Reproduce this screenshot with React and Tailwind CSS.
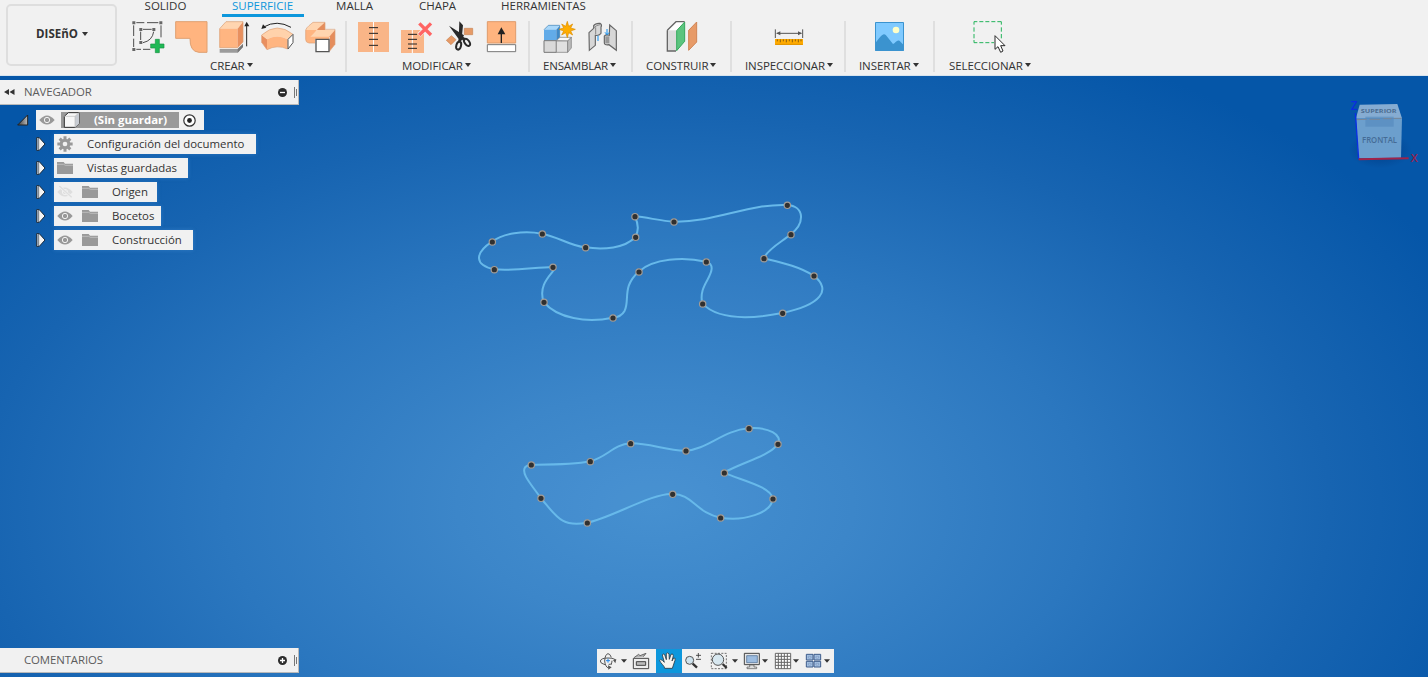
import React from "react";

const UI = "font-['Open_Sans',sans-serif]";

function Caret({ className = "" }) {
  return (
    <svg width="6" height="4" viewBox="0 0 6 4" className={className}>
      <path d="M0 0H6L3 4Z" fill="#333" />
    </svg>
  );
}

/* Toolbar drawings use a grid of three units per pixel. */
function Icon({ x, y = 54, w, h = 111, children }) {
  return (
    <svg width={w / 3} height={h / 3} viewBox={`${x} ${y} ${w} ${h}`} className="block shrink-0 overflow-visible">
      {children}
    </svg>
  );
}

const Sketch = () => (
  <Icon x={380} w={129}>
    <g stroke="#4d4d4d" strokeWidth="3" fill="none">
      <path d="M408 68H432M440 68H474M400 76V108M400 116V141M482 76V112M408 148H422M428 148H450" />
      <path d="M428 88H454M421 95V120M460 95Q456 122 428 128" />
    </g>
    <g fill="#666">
      <path d="M396 64h9v9h-9zM477 64h9v9h-9zM396 144h9v9h-9zM417 84h9v9h-9zM456 84h9v9h-9zM417 123h9v9h-9z" />
    </g>
    <path d="M465 118h12v14h14v12h-14v14h-12v-14h-14v-12h14z" fill="#1fb955" stroke="#199344" strokeWidth="2" />
  </Icon>
);

const Patch = () => (
  <Icon x={509} w={129}>
    <path d="M526 65H620V157H596Q568 155 569 115H526Z" fill="#ffb47f" stroke="#dfa071" strokeWidth="3" />
  </Icon>
);

const Extrude = () => (
  <Icon x={638} w={129}>
    <path d="M658 147H712L728 132V141L712 158H658Z" fill="#9b9b9b" />
    <path d="M712 147L728 132V141L712 158Z" fill="#777" />
    <path d="M658 86L677 65H728L712 86Z" fill="#ffd5b0" />
    <path d="M658 86H712V143H658Z" fill="#ffb581" />
    <path d="M712 86L728 65V126L712 143Z" fill="#e8905f" />
    <path d="M658 86L677 65H728V126L712 143H658Z" fill="none" stroke="#d99b6e" strokeWidth="2" />
    <path d="M739 139V72" stroke="#222" strokeWidth="3" />
    <path d="M732 79L739 65L747 79Z" fill="#222" />
  </Icon>
);

const Revolve = () => (
  <Icon x={767} w={129}>
    <path d="M784 105L800 118V149L784 127Z" fill="#e98f5f" />
    <path d="M784 105Q830 64 878 103L862 118Q830 101 800 118Z" fill="#ffd2ab" />
    <path d="M800 118Q830 101 862 118V147Q830 133 800 149Z" fill="#ffb581" />
    <path d="M784 105Q830 64 878 103M784 105V127L800 149Q830 133 862 147" fill="none" stroke="#dda077" strokeWidth="2" />
    <path d="M863 118L878 103V128L863 147Z" fill="#fff" stroke="#555" strokeWidth="3" />
    <path d="M790 81Q830 58 872 82" fill="none" stroke="#222" strokeWidth="3" />
    <path d="M783 87L788 73L798 83Z" fill="#222" />
  </Icon>
);

const Sweep = () => (
  <Icon x={896} w={129}>
    <path d="M916 90H950L938 104H986V118H944V129H926Q916 128 916 118Z" fill="#ffb581" />
    <path d="M916 90Q918 84 926 77L938 67H974L951 90Z" fill="#ffd5b0" />
    <path d="M951 88L974 67V90H951Z" fill="#e58d5c" />
    <path d="M930 110L951 90H1004L989 110Z" fill="#ffd5b0" />
    <path d="M1004 90V133L988 153V109Z" fill="#e58d5c" />
    <path d="M916 90Q918 84 926 77L938 67H974V88H1004V133L988 153M916 90V118Q916 128 926 129H944" fill="none" stroke="#dda077" strokeWidth="2" />
    <path d="M947 118H986V155H947Z" fill="#fff" stroke="#555" strokeWidth="4" />
  </Icon>
);

const Stitch = () => (
  <Icon x={21} w={129}>
    <path d="M39 66H132V156H39Z" fill="#f9b587" />
    <path d="M85.5 66V156" stroke="#fff" strokeWidth="3" />
    <path d="M72 83H99M72 100H99M72 118H99M72 136H99" stroke="#222" strokeWidth="3" />
  </Icon>
);

const Unstitch = () => (
  <Icon x={150} w={129}>
    <path d="M168 90H237V159H168Z" fill="#f9b587" />
    <path d="M202 90V159" stroke="#fff" strokeWidth="3" />
    <path d="M189 103H216M189 118H216M189 132H216M189 145H216" stroke="#222" strokeWidth="3" />
    <path d="M222 70L258 105M258 70L222 105" stroke="#f1f1f1" strokeWidth="14" />
    <path d="M223 70L258 105M258 70L223 105" stroke="#ff6463" strokeWidth="10" />
  </Icon>
);

const Trim = () => (
  <Icon x={279} w={129}>
    <path d="M358 85H383V104H358Z" fill="#e69a67" stroke="#c98452" strokeWidth="2" />
    <path d="M304 121L319 107L333 119L318 134Z" fill="#e69a67" stroke="#c98452" strokeWidth="2" />
    <path d="M312 77L357 106L350 120L341 117ZM343 64L354 76L350 118L341 121Z" fill="#292929" />
    <path d="M348 112L343 126M348 112L362 120" stroke="#292929" strokeWidth="9" />
    <ellipse cx="341" cy="137" rx="7" ry="12" transform="rotate(15 341 137)" fill="#f1f1f1" stroke="#292929" strokeWidth="6" />
    <ellipse cx="366" cy="127" rx="7" ry="12" transform="rotate(-35 366 127)" fill="#f1f1f1" stroke="#292929" strokeWidth="6" />
  </Icon>
);

const Extend = () => (
  <Icon x={408} w={129}>
    <path d="M427 65H512V129H427Z" fill="#ffb47f" stroke="#df9c6c" strokeWidth="3" />
    <path d="M427 134H512V155H427Z" fill="#fff" stroke="#777" strokeWidth="3" />
    <path d="M469 129V98" stroke="#222" strokeWidth="4" />
    <path d="M458 103L469 82L481 103Z" fill="#222" />
  </Icon>
);

const NewComponent = () => (
  <Icon x={571} w={135}>
    <path d="M598 89L611 76H645L635 89Z" fill="#a8d7fa" />
    <path d="M598 89H635V122H598Z" fill="#62abe8" />
    <path d="M635 89L645 77V112L635 122Z" fill="#3f88c6" />
    <path d="M598 89L611 76H645V112" stroke="#3b7db2" strokeWidth="2" fill="none" />
    <path d="M598 122H635V157H598Z" fill="#d9d9d9" stroke="#777" strokeWidth="3" />
    <path d="M635 122L646 112H680L669 123Z" fill="#fafafa" stroke="#777" strokeWidth="2" />
    <path d="M635 123H669V157H635Z" fill="#e0e0e0" stroke="#777" strokeWidth="2" />
    <path d="M669 123L680 112V144L669 157Z" fill="#bbb" stroke="#777" strokeWidth="2" />
    <path d="M668 64L672 79L684 72L678 84L692 88L678 93L684 105L672 98L668 113L663 98L651 105L657 93L643 88L657 84L651 72L663 79Z" fill="#ffad00" stroke="#dc8c00" strokeWidth="2" />
  </Icon>
);

const Joint = () => (
  <Icon x={706} w={135}>
    <path d="M733 98L747 85V77Q752 69 766 70Q773 74 769 82V100Q765 108 752 106V136L734 151Z" fill="#d7d7d7" stroke="#666" strokeWidth="3.500" />
    <path d="M748 83Q756 75 766 74M753 103V82" stroke="#888" fill="none" strokeWidth="3" />
    <path d="M795 75L815 92V151L793 134Q778 136 779 128V108Q784 102 794 106Z" fill="#d7d7d7" stroke="#666" strokeWidth="3.500" />
    <path d="M782 109H794V130H782Z" fill="#999" />
    <path d="M760 107V123" stroke="#0f8cec" strokeWidth="3" />
    <path d="M787 87V104M781 97L787 104L794 97" stroke="#0f8cec" strokeWidth="3" fill="none" />
  </Icon>
);

const Plane = () => (
  <Icon x={945} w={135}>
    <path d="M967 91L993 65H1019L993 91V153H967Z" fill="#fff" />
    <path d="M967 91H993V153H967Z" fill="#dcdcdc" />
    <path d="M967 91L993 65H1019M967 91V153H993" fill="none" stroke="#666" strokeWidth="4" />
    <path d="M995 92L1019 66V124L995 152Z" fill="#5bc47e" stroke="#35a85d" strokeWidth="3" />
    <path d="M1031 91L1055 66V126L1031 151Z" fill="#e79b68" stroke="#d08455" strokeWidth="3" />
  </Icon>
);

const Measure = () => (
  <Icon x={231} w={132}>
    <path d="M256 88V114M338 88V114M260 100H334" stroke="#555" strokeWidth="3" />
    <path d="M259 100L271 94V106ZM336 100L324 94V106Z" fill="#555" />
    <path d="M255 117H339V135H255Z" fill="#ffab00" />
    <path d="M256 133H338" stroke="#df9200" strokeWidth="3" />
    <path d="M262 118V124M271 118V127M280 118V124M289 118V127M298 118V124M307 118V127M316 118V124M325 118V127M333 118V124" stroke="#77510d" strokeWidth="2.5" />
  </Icon>
);

const Insert = () => (
  <Icon x={531} w={135}>
    <path d="M556 67H641V152H556Z" fill="#80caff" />
    <path d="M556 129C572 108 580 96 588 106L609 132C617 128 623 114 632 126L641 135V152H556Z" fill="#3b93cf" />
    <circle cx="618" cy="90" r="10" fill="#ffffc8" />
    <path d="M556.5 67.5H640.5V151.5H556.5Z" fill="none" stroke="#3b93cf" strokeWidth="3" />
  </Icon>
);

const Select = () => (
  <Icon x={826} w={135}>
    <path d="M850 74V65H860M866 65H878M884 65H896M902 65H914M920 65H932V74M932 82V95M932 102V115M850 82V95M850 102V115M850 120V128H860M866 128H878M884 128H896M902 128H910" fill="none" stroke="#23b45b" strokeWidth="3" />
    <path d="M913 107V148L922 140L930 157L937 153L930 137H943Z" fill="#fff" stroke="#292929" strokeWidth="3" />
  </Icon>
);

function Group({ label, width, pad, icons, labelPad, track = "tracking-[-0.1px]" }) {
  return (
    <section className={`flex flex-col shrink-0 ${width}`}>
      <div className={`flex h-[37px] ${pad}`}>
        {icons.map((I, i) => (
          <I key={i} />
        ))}
      </div>
      <div className={`flex items-center h-[18px] mt-[2px] text-[11.5px] leading-[18px] text-[#333] whitespace-nowrap ${labelPad} ${track}`}>
        {label}
        <Caret className="ml-[2px] -mt-[3px]" />
      </div>
    </section>
  );
}

const Sep = () => <div className="w-[2px] h-[51px] mt-[3px] shrink-0 bg-[#dfdfdf]" />;

const tabs = [
  ["SOLIDO", "w-[82px]", false],
  ["SUPERFICIE", "w-[112px]", true],
  ["MALLA", "w-[72px]", false],
  ["CHAPA", "w-[94px]", false],
  ["HERRAMIENTAS", "w-[118px]", false],
];

function Header() {
  return (
    <header className="flex h-[76px] shrink-0 bg-[#f1f1f1] border-b border-[#d8e4ee]">
      <button className="ml-[6px] mt-[4px] w-[111px] h-[62px] shrink-0 rounded-[5px] border-2 border-[#dedede] flex items-center justify-center pb-[2px] pl-px text-[11.5px] font-bold text-[#333]">
        DISEñO
        <Caret className="ml-[4px]" />
      </button>
      <div className="flex flex-col">
        <nav className="flex h-[17px] pl-[7.5px] text-[11.5px] text-[#333]">
          {tabs.map(([name, w, active]) => (
            <div key={name} className={`${w} flex flex-col items-center justify-between shrink-0`}>
              <span className={`h-[11px] leading-[11px] ${active ? "text-[#0d97dc]" : ""}`}>{name}</span>
              {active && <span className="w-[82px] h-[3px] bg-[#0d97dc]" />}
            </div>
          ))}
        </nav>
        <div className="flex pt-px">
          <Group label="CREAR" width="w-[228px]" pad="pl-[9.7px]" labelPad="pl-[93px]" icons={[Sketch, Patch, Extrude, Revolve, Sweep]} />
          <Sep />
          <Group label="MODIFICAR" width="w-[181px]" pad="pl-[5px]" labelPad="pl-[55px]" icons={[Stitch, Unstitch, Trim, Extend]} />
          <Sep />
          <Group label="ENSAMBLAR" width="w-[101px]" pad="pl-[5.3px]" labelPad="pl-[13px]" icons={[NewComponent, Joint]} track="tracking-[-0.2px]" />
          <Sep />
          <Group label="CONSTRUIR" width="w-[97px]" pad="pl-[27px]" labelPad="pl-[13px]" icons={[Plane]} />
          <Sep />
          <Group label="INSPECCIONAR" width="w-[112px]" pad="pl-[35px]" labelPad="pl-[13px]" icons={[Measure]} />
          <Sep />
          <Group label="INSERTAR" width="w-[87px]" pad="pl-[21px]" labelPad="pl-[13px]" icons={[Insert]} />
          <Sep />
          <Group label="SELECCIONAR" width="w-[110px]" pad="pl-[30.6px]" labelPad="pl-[14px]" icons={[Select]} />
        </div>
      </div>
    </header>
  );
}

const Eye = ({ off }) => (
  <svg width="16" height="12" viewBox="0 0 48 36" className="block shrink-0">
    <path d="M1 18Q24-9 47 18Q24 45 1 18Z" fill={off ? "#dedede" : "#999"} />
    <circle cx="24" cy="18" r="8" fill="none" stroke="#f1f1f1" strokeWidth="3" />
    {off && <path d="M4-2L46 36" stroke="#f1f1f1" strokeWidth="8" />}
    {off && <path d="M7 0L44 34" stroke="#dedede" strokeWidth="4" />}
  </svg>
);

const Folder = () => (
  <svg width="16" height="12" viewBox="0 0 48 36" className="block shrink-0">
    <path d="M0 0H20L24 5H48V36H0Z" fill="#999" />
    <path d="M0 7H20L25 10H48" stroke="#ccc" strokeWidth="2" fill="none" />
  </svg>
);

const Gear = () => (
  <svg width="16" height="16" viewBox="0 0 48 48" className="block shrink-0">
    <g stroke="#999" strokeWidth="9">
      <path d="M24 1V47M1 24H47M8 8L40 40M40 8L8 40" />
    </g>
    <circle cx="24" cy="24" r="16" fill="#999" />
    <circle cx="24" cy="24" r="7" fill="#f1f1f1" />
  </svg>
);

const Expander = () => (
  <svg width="10" height="14" viewBox="0 0 30 42" className="block shrink-0">
    <path d="M2 2H10L27 21L10 40H2Z" fill="#f4f4f4" stroke="#1b2a3a" strokeWidth="3" strokeLinejoin="round" />
    <path d="M4.500 4V38" stroke="#8fa0b3" strokeWidth="3" />
    <path d="M8 3V39" stroke="#2d3a48" strokeWidth="2" />
  </svg>
);

const rows = [
  ["Configuración del documento", "w-[202px]", "gear"],
  ["Vistas guardadas", "w-[134px]", "folder"],
  ["Origen", "w-[103px]", "off"],
  ["Bocetos", "w-[107px]", "on"],
  ["Construcción", "w-[139px]", "on"],
];

function PanelBar({ title, plus, back }) {
  return (
    <div className="flex items-center w-[299px] h-[25px] shrink-0 bg-[#f1f1f1] border-b border-r border-[#b9b9b9] text-[11.4px] tracking-[-0.1px] text-[#5c5c5c]">
      <div className="w-[24px] pl-[4px]">
        {back && (
          <svg width="11" height="6" viewBox="0 0 11 6">
            <path d="M5 0V6L0 3ZM10.500 0V6L5.500 3Z" fill="#333" />
          </svg>
        )}
      </div>
      <span className="flex-1 leading-[24px]">{title}</span>
      <svg width="9" height="9" viewBox="0 0 9 9">
        <circle cx="4.5" cy="4.5" r="4.500" fill="#2c2c2c" />
        <path d={plus ? "M2 4.500H7M4.500 2V7" : "M2 4.500H7"} stroke="#fff" strokeWidth="1.300" />
      </svg>
      <div className="ml-[7px] mr-px flex gap-px items-center">
        <i className="w-px h-[11px] bg-[#777]" />
        <i className="w-px h-[7px] bg-[#777]" />
      </div>
    </div>
  );
}

function Browser() {
  return (
    <div className="flex flex-col pt-[4px]">
      <PanelBar title="NAVEGADOR" back />
      <div className="flex flex-col gap-[4px] pt-[5px] text-[11.4px] font-medium text-[#333]">
        <div className="flex items-center h-[20px]">
          <svg width="12" height="12" viewBox="0 0 36 36" className="ml-[17px] mr-[7px]">
            <defs>
              <linearGradient id="open" x1="0" x2="1">
                <stop offset="0.2" stopColor="#555" />
                <stop offset="1" stopColor="#bbb" />
              </linearGradient>
            </defs>
            <path d="M2 33L32 3V33Z" fill="url(#open)" stroke="#222" strokeWidth="3" />
          </svg>
          <div className="flex items-center w-[168px] h-[20px] bg-[#f1f1f1] pl-[3px]">
            <Eye />
            <div className="ml-[6px] w-[118px] h-[16px] bg-[#999] flex items-center text-white font-bold">
              <svg width="17" height="16" viewBox="0 0 51 48" className="ml-[2px] overflow-visible">
                <path d="M4 13L16 2H48V35L36 46H4Z" fill="#f7f7f7" stroke="#333" strokeWidth="3" strokeLinejoin="round" />
                <path d="M36 13L48 2V35L36 46Z" fill="#c8ccd3" />
                <path d="M4 13H36L48 2M36 13V46" fill="none" stroke="#bbb" strokeWidth="2" />
              </svg>
              <span className="ml-[14px] leading-[16px]">(Sin guardar)</span>
            </div>
            <svg width="13" height="13" viewBox="0 0 13 13" className="ml-[4px]">
              <circle cx="6.500" cy="6.500" r="5.700" fill="#fff" stroke="#333" strokeWidth="1.200" />
              <circle cx="6.500" cy="6.500" r="2.400" fill="#222" />
            </svg>
          </div>
        </div>
        {rows.map(([name, w, kind]) => (
          <div key={name} className="flex items-center h-[20px] pl-[35.5px]">
            <Expander />
            <div className={`ml-[8.5px] flex items-center h-[20px] bg-[#f1f1f1] pl-[3px] whitespace-nowrap shadow-[0_0_4px_rgba(120,190,250,0.25)] ${w}`}>
              {kind === "gear" && <Gear />}
              {kind === "folder" && <Folder />}
              {(kind === "on" || kind === "off") && (
                <>
                  <Eye off={kind === "off"} />
                  <span className="ml-[9px]">
                    <Folder />
                  </span>
                </>
              )}
              <span className="ml-[14px]">{name}</span>
            </div>
          </div>
        ))}
      </div>
    </div>
  );
}

function Profile({ d, points, w, h, place }) {
  return (
    <svg width={w / 3} height={h / 3} viewBox={`0 0 ${w} ${h}`} className={`absolute ${place}`}>
      <path d={d} fill="#65a5df" fillOpacity="0.1" stroke="#67b9ea" strokeWidth="6" strokeLinejoin="round" />
      {points.map(([x, y]) => (
        <circle key={`${x}-${y}`} cx={x + 1} cy={y + 1} r="9.500" fill="#303030" stroke="#a29c96" strokeWidth="3.500" />
      ))}
    </svg>
  );
}

const upper = {
  d: "M66 155C100 130 160 120 216 131C265 140 300 168 346 172C400 180 465 175 496 141C508 120 505 100 494 79C530 82 575 93 611 95C730 98 840 40 951 45C1005 48 1005 100 962 133C940 153 895 175 881 205C935 218 985 228 1031 257C1087 300 1052 345 937 369C840 388 745 390 697 341C685 290 725 265 725 235C725 225 718 218 708 215C640 200 550 205 506 245C455 290 480 330 464 362C457 375 445 382 428 383C350 400 262 385 221 336C205 290 235 262 252 240L248 231C195 232 130 244 72 238C13 225 13 190 66 155Z",
  points: [[66, 155], [216, 131], [346, 172], [496, 141], [494, 79], [611, 95], [951, 45], [962, 133], [881, 205], [1031, 257], [937, 369], [697, 341], [708, 215], [506, 245], [428, 383], [221, 336], [248, 231], [72, 238]],
};

const lower = {
  d: "M63 149C120 149 190 150 240 139C290 128 310 88 361 85C420 84 470 108 527 107C590 105 640 45 716 40C775 35 820 60 803 87C785 120 690 145 642 173C690 195 785 215 788 251C785 295 700 320 631 308C560 295 545 235 487 237C430 232 290 315 231 323C155 338 140 305 92 249C70 215 30 175 46 156Q52 149 63 149Z",
  points: [[63, 149], [240, 139], [361, 85], [527, 107], [716, 40], [803, 87], [642, 173], [788, 251], [631, 308], [487, 237], [231, 323], [92, 249]],
};

function ViewCube() {
  return (
    <svg width="98" height="90" viewBox="0 0 294 270" className="absolute left-[1330px] top-[9px]">
      <defs>
        <radialGradient id="cubeShade">
          <stop offset="0.500" stopColor="#023f87" stopOpacity="0.5" />
          <stop offset="1" stopColor="#023f87" stopOpacity="0" />
        </radialGradient>
      </defs>
      <ellipse cx="150" cy="195" rx="95" ry="55" fill="url(#cubeShade)" />
      <path d="M89 59L202 57L216 100H78Z" fill="#86acd2" />
      <path d="M78 100H216L213 218L85 220Z" fill="#6c9fcd" />
      <path d="M106 95H191V125H106Z" fill="#5489bd" opacity="0.600" />
      <path d="M78 104L110 103M118 103H150M160 101H185M191 100H214" stroke="#7b8797" strokeWidth="3" />
      <text x="92" y="83" fontSize="13" fontWeight="700" textLength="108" lengthAdjust="spacingAndGlyphs" fill="#4c6d90">SUPERIOR</text>
      <text x="96" y="174" fontSize="27" fontWeight="600" textLength="105" lengthAdjust="spacingAndGlyphs" fill="#456c96">FRONTAL</text>
      <path d="M76 84L86 222" stroke="#0b2ee6" strokeWidth="4" />
      <path d="M86 223L236 220" stroke="#a02349" strokeWidth="6" />
      <text x="62" y="75" fontSize="35" fontWeight="600" fill="#0a2de0">Z</text>
      <text x="242" y="230" fontSize="34" fontWeight="600" fill="#96224d">X</text>
    </svg>
  );
}

function NavIcon({ x, w, children }) {
  return (
    <svg width={w / 3} height="24" viewBox={`${x} 27 ${w} 72`} className="block shrink-0">
      {children}
    </svg>
  );
}

const Down = ({ x }) => <path d={`M${x - 9} 58H${x + 9}L${x} 68Z`} fill="#333" />;

function NavBar() {
  return (
    <div className="flex h-[24px] w-[237px] bg-[#f1f1f1]">
      <NavIcon x={21} w={99}>
        <path d="M45 74Q30 70 31 63Q33 54 54 54Q75 54 77 62M66 72Q60 73 56 73" fill="none" stroke="#555" strokeWidth="3" />
        <path d="M64 52Q60 41 54 41Q45 43 44 63Q46 82 56 84M64 72Q66 66 66 62" fill="none" stroke="#555" strokeWidth="3" />
        <path d="M48 62H60M54 56V68" stroke="#2386e8" strokeWidth="3" />
        <path d="M69 60L79 57L76 70ZM54 76L65 82L55 89Z" fill="#555" />
        <Down x={102} />
      </NavIcon>
      <NavIcon x={120} w={78}>
        <path d="M130 55H176V86H130Z" fill="#ededed" stroke="#444" strokeWidth="3" />
        <path d="M139 65H167V76H139Z" fill="#bbb" stroke="#444" strokeWidth="3" />
        <path d="M132 53L146 43L150 47L168 40L160 50" fill="#b5b5b5" stroke="#666" strokeWidth="3" />
      </NavIcon>
      <div className="bg-[#0d97dc]">
        <NavIcon x={198} w={78}>
          <path d="M224 85C224 78 212 70 209 62Q211 56 217 61L223 67L217 45Q219 39 224 44L229 59L229 41Q234 35 237 42L238 58L243 43Q249 39 250 47L246 63L251 54Q258 53 255 61L247 85Z" fill="#f6f4ef" stroke="#2d3b45" strokeWidth="2.500" strokeLinejoin="round" />
        </NavIcon>
      </div>
      <NavIcon x={276} w={78}>
        <path d="M308 71L321 83" stroke="#333" strokeWidth="7" />
        <circle cx="299" cy="61" r="12" fill="#cfe3ee" stroke="#555" strokeWidth="3" />
        <path d="M318 46H333M325 39V53M318 58H333" stroke="#333" strokeWidth="2.500" />
      </NavIcon>
      <NavIcon x={354} w={96}>
        <path d="M364 40H409V86H364Z" fill="none" stroke="#555" strokeWidth="2.500" strokeDasharray="6 4" />
        <path d="M398 72L410 84" stroke="#333" strokeWidth="7" />
        <circle cx="384" cy="59" r="17" fill="#d7e7ef" stroke="#555" strokeWidth="3" />
        <Down x={435} />
      </NavIcon>
      <NavIcon x={450} w={90}>
        <path d="M463 40H508V74H463Z" fill="#e5e5e5" stroke="#444" strokeWidth="3" />
        <path d="M470 47H502V68H470Z" fill="#9cbce0" stroke="#42658c" strokeWidth="2" />
        <path d="M479 75H492V81H500V86H471V81H479Z" fill="#ddd" stroke="#555" strokeWidth="2" />
        <Down x={525} />
      </NavIcon>
      <NavIcon x={540} w={96}>
        <path d="M556 40H602V86H556Z" fill="#fff" />
        <path d="M556 40H602V86H556ZM565 40V86M574 40V86M583 40V86M592 40V86M556 49H602M556 58H602M556 67H602M556 76H602" fill="none" stroke="#666" strokeWidth="3" />
        <Down x={618} />
      </NavIcon>
      <NavIcon x={636} w={96}>
        <path d="M649 43H669V60H649ZM672 43H692V60H672ZM649 64H669V81H649ZM672 64H692V81H672Z" fill="#a5c1e2" stroke="#3e5c8b" strokeWidth="3" />
        <path d="M655 49H663V54H655ZM678 49H686V54H678ZM655 70H663V75H655ZM678 70H686V75H678Z" fill="#c3d6ed" stroke="#6f8fbb" strokeWidth="2" />
        <Down x={711} />
      </NavIcon>
    </div>
  );
}

export default function App() {
  return (
    <div className={`flex flex-col w-[1428px] h-[677px] overflow-hidden ${UI}`}>
      <Header />
      <main className="relative flex-1 flex flex-col justify-between pb-[4px] bg-[radial-gradient(ellipse_900px_520px_at_655px_430px,#4690d0_0%,#3c86c9_22%,#2b77bf_48%,#1764b1_75%,#0556a8_100%)]">
        <Profile {...upper} w={1095} h={420} place="left-[470px] top-[114px]" />
        <Profile {...lower} w={870} h={360} place="left-[510px] top-[339px]" />
        <ViewCube />
        <Browser />
        <div className="flex items-end">
          <PanelBar title="COMENTARIOS" plus />
          <div className="ml-[298px]">
            <NavBar />
          </div>
        </div>
      </main>
    </div>
  );
}
